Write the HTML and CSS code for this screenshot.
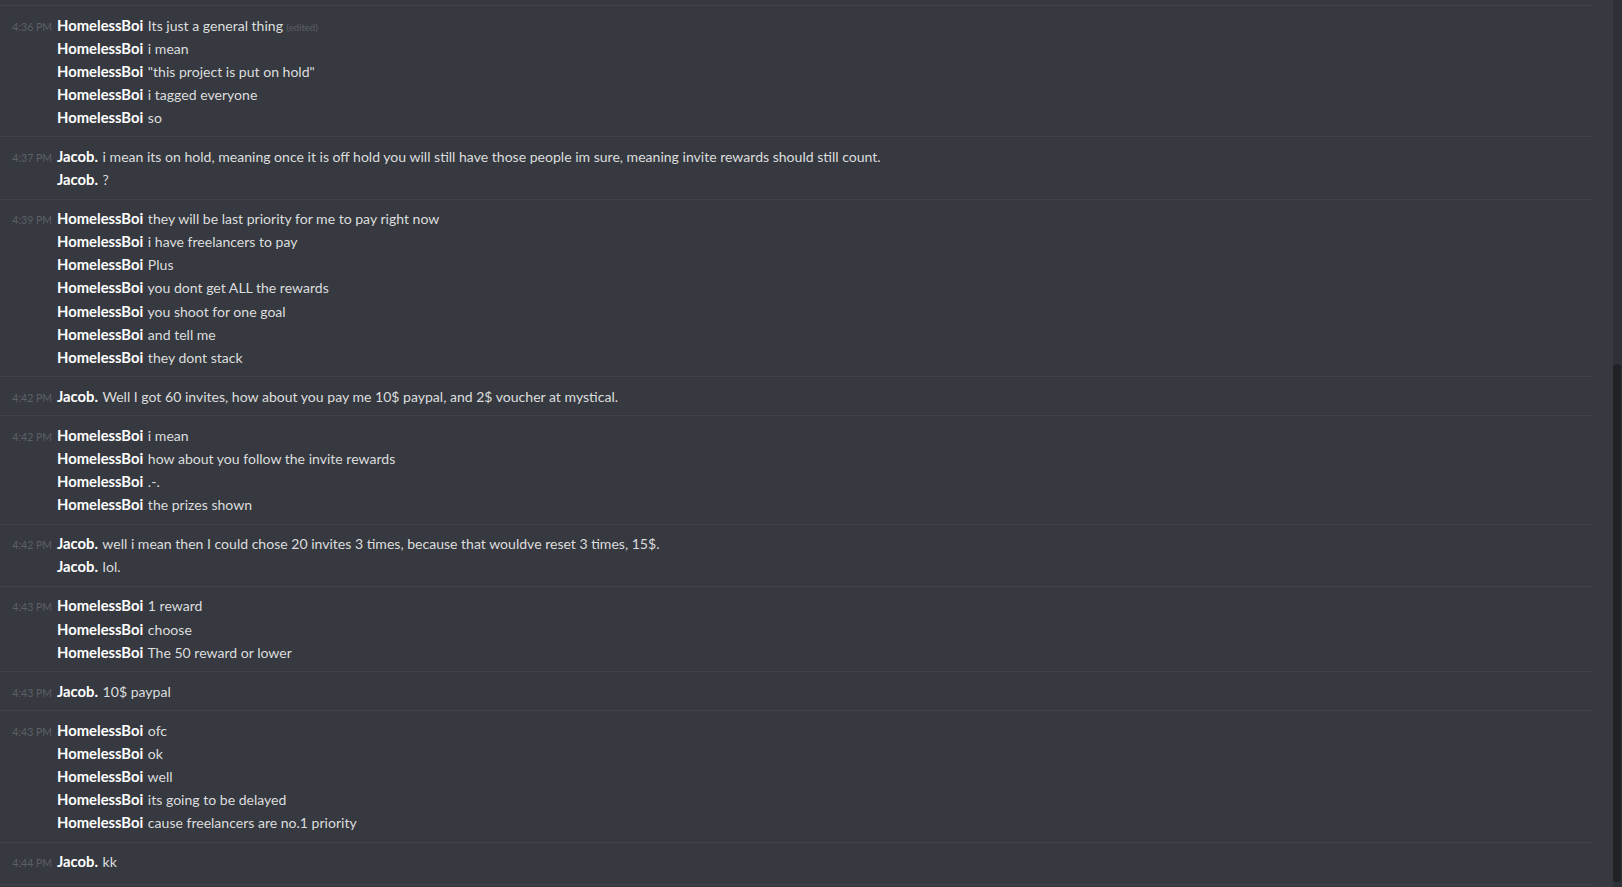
FILE: index.html
```html
<!DOCTYPE html>
<html>
<head>
<meta charset="utf-8">
<link rel="stylesheet" href="styles.css">
</head>
<body>
<div class="app">
  <div class="chat">
    <div class="group">
      <div class="line"><span class="ts">4:36 PM</span><span class="msg"><b class="name">HomelessBoi</b> Its just a general thing <span class="edited">(edited)</span></span></div>
      <div class="line"><span class="ts"></span><span class="msg"><b class="name">HomelessBoi</b> i mean</span></div>
      <div class="line"><span class="ts"></span><span class="msg"><b class="name">HomelessBoi</b> "this project is put on hold"</span></div>
      <div class="line"><span class="ts"></span><span class="msg"><b class="name">HomelessBoi</b> i tagged everyone</span></div>
      <div class="line"><span class="ts"></span><span class="msg"><b class="name">HomelessBoi</b> so</span></div>
    </div>
    <div class="group">
      <div class="line"><span class="ts">4:37 PM</span><span class="msg"><b class="name">Jacob.</b> i mean its on hold, meaning once it is off hold you will still have those people im sure, meaning invite rewards should still count.</span></div>
      <div class="line"><span class="ts"></span><span class="msg"><b class="name">Jacob.</b> ?</span></div>
    </div>
    <div class="group">
      <div class="line"><span class="ts">4:39 PM</span><span class="msg"><b class="name">HomelessBoi</b> they will be last priority for me to pay right now</span></div>
      <div class="line"><span class="ts"></span><span class="msg"><b class="name">HomelessBoi</b> i have freelancers to pay</span></div>
      <div class="line"><span class="ts"></span><span class="msg"><b class="name">HomelessBoi</b> Plus</span></div>
      <div class="line"><span class="ts"></span><span class="msg"><b class="name">HomelessBoi</b> you dont get ALL the rewards</span></div>
      <div class="line"><span class="ts"></span><span class="msg"><b class="name">HomelessBoi</b> you shoot for one goal</span></div>
      <div class="line"><span class="ts"></span><span class="msg"><b class="name">HomelessBoi</b> and tell me</span></div>
      <div class="line"><span class="ts"></span><span class="msg"><b class="name">HomelessBoi</b> they dont stack</span></div>
    </div>
    <div class="group">
      <div class="line"><span class="ts">4:42 PM</span><span class="msg"><b class="name">Jacob.</b> Well I got 60 invites, how about you pay me 10$ paypal, and 2$ voucher at mystical.</span></div>
    </div>
    <div class="group">
      <div class="line"><span class="ts">4:42 PM</span><span class="msg"><b class="name">HomelessBoi</b> i mean</span></div>
      <div class="line"><span class="ts"></span><span class="msg"><b class="name">HomelessBoi</b> how about you follow the invite rewards</span></div>
      <div class="line"><span class="ts"></span><span class="msg"><b class="name">HomelessBoi</b> .-.</span></div>
      <div class="line"><span class="ts"></span><span class="msg"><b class="name">HomelessBoi</b> the prizes shown</span></div>
    </div>
    <div class="group">
      <div class="line"><span class="ts">4:42 PM</span><span class="msg"><b class="name">Jacob.</b> well i mean then I could chose 20 invites 3 times, because that wouldve reset 3 times, 15$.</span></div>
      <div class="line"><span class="ts"></span><span class="msg"><b class="name">Jacob.</b> lol.</span></div>
    </div>
    <div class="group">
      <div class="line"><span class="ts">4:43 PM</span><span class="msg"><b class="name">HomelessBoi</b> 1 reward</span></div>
      <div class="line"><span class="ts"></span><span class="msg"><b class="name">HomelessBoi</b> choose</span></div>
      <div class="line"><span class="ts"></span><span class="msg"><b class="name">HomelessBoi</b> The 50 reward or lower</span></div>
    </div>
    <div class="group">
      <div class="line"><span class="ts">4:43 PM</span><span class="msg"><b class="name">Jacob.</b> 10$ paypal</span></div>
    </div>
    <div class="group">
      <div class="line"><span class="ts">4:43 PM</span><span class="msg"><b class="name">HomelessBoi</b> ofc</span></div>
      <div class="line"><span class="ts"></span><span class="msg"><b class="name">HomelessBoi</b> ok</span></div>
      <div class="line"><span class="ts"></span><span class="msg"><b class="name">HomelessBoi</b> well</span></div>
      <div class="line"><span class="ts"></span><span class="msg"><b class="name">HomelessBoi</b> its going to be delayed</span></div>
      <div class="line"><span class="ts"></span><span class="msg"><b class="name">HomelessBoi</b> cause freelancers are no.1 priority</span></div>
    </div>
    <div class="group last">
      <div class="line"><span class="ts">4:44 PM</span><span class="msg"><b class="name">Jacob.</b> kk</span></div>
    </div>
    <div class="group end"></div>
  </div>
  <div class="scrollbar"><div class="thumb"></div></div>
</div>
</body>
</html>
```

FILE: styles.css
```css
html, body {
  margin: 0;
  padding: 0;
  background: #36393f;
  overflow: hidden;
}
.app {
  display: flex;
  height: 887px;
  width: 1622px;
  background: #36393f;
  font-family: Lato, "Open Sans", sans-serif;
}
.chat {
  width: 1593px;
  padding-top: 5px;
  display: flex;
  flex-direction: column;
  margin-right: 20px;
}
.group {
  border-top: 1px solid #40434a;
  padding: 7.5px 0 7.5px;
}
.group.last {
  padding-bottom: 10.5px;
}
.group.end {
  padding: 0;
}
.line {
  display: grid;
  grid-template-columns: 52px 1fr;
  column-gap: 5px;
  height: 23.1px;
  line-height: 23.1px;
  align-items: baseline;
  white-space: nowrap;
}
.ts {
  text-align: right;
  font-size: 10.5px;
  color: #5d6067;
}
.msg {
  font-size: 14.05px;
  color: #dcddde;
}
.name {
  color: #ffffff;
  font-weight: 700;
  font-size: 14.8px;
  margin-right: 1px;
}
.edited {
  font-size: 9.5px;
  color: #5d6067;
}
.scrollbar {
  width: 9px;
  background: #2f3136;
  display: flex;
  flex-direction: column;
  justify-content: flex-end;
  padding-bottom: 5px;
}
.thumb {
  width: 8px;
  height: 518px;
  background: #202225;
  border-radius: 4px;
}
```
